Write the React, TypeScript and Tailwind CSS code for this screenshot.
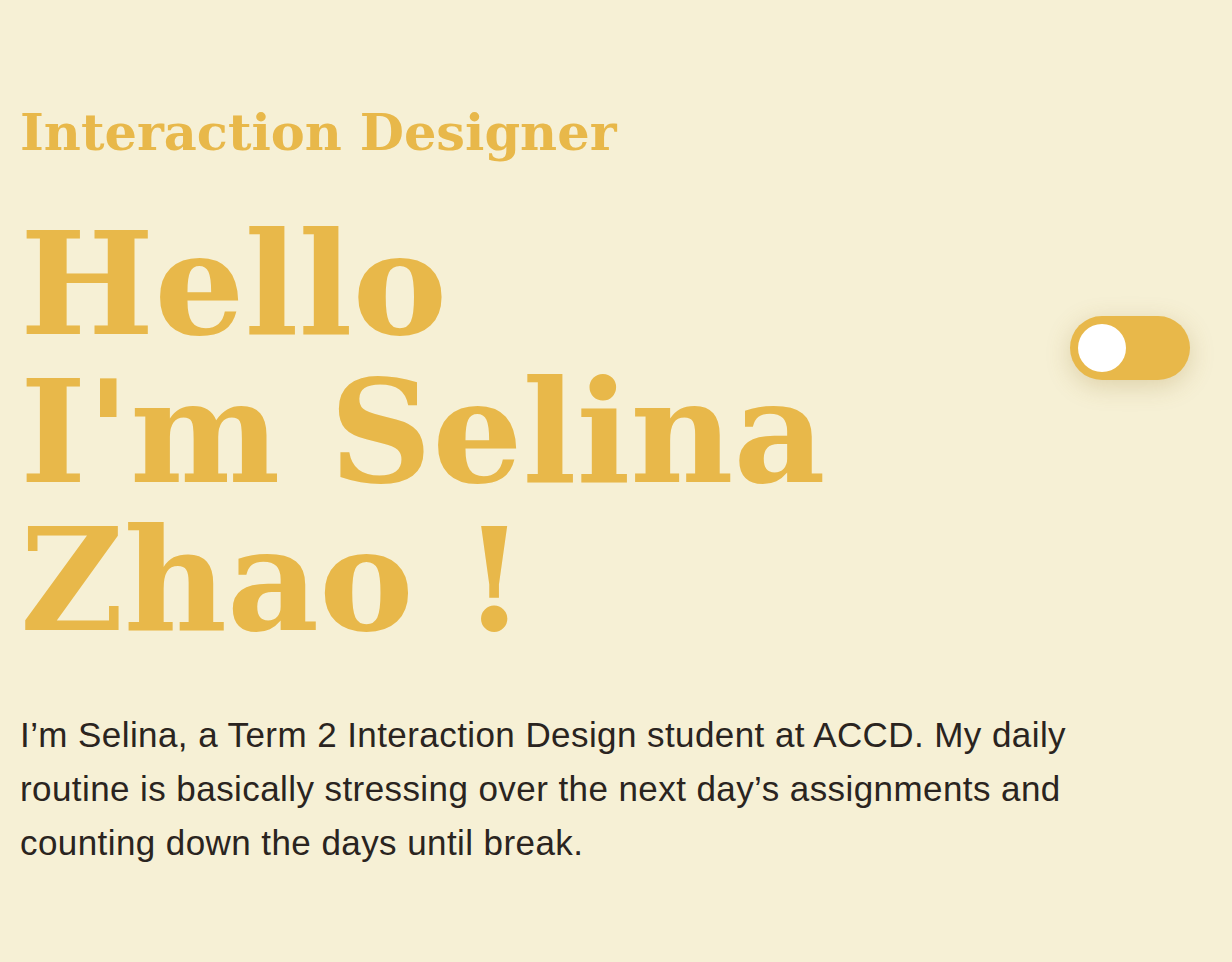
export default function App() {
  return (
    <div className="min-h-screen w-full bg-[#f6f0d5] px-5 pt-[102px]">
      <div className="flex items-start justify-between">
        <div>
          <h2 className="font-['DejaVu_Serif',serif] text-[51px] font-bold leading-[1.2] text-[#e8b84a]">
            Interaction Designer
          </h2>
          <h1 className="mt-[47px] font-['DejaVu_Serif',serif] text-[142px] font-bold leading-[148px] text-[#e8b84a]">
            Hello
            <br />
            I'm Selina
            <br />
            Zhao !
          </h1>
        </div>
        <button className="mr-[22px] mt-[214px] flex h-16 w-[120px] items-center rounded-full bg-[#e8b84a] px-2 shadow-[0_6px_24px_rgba(150,120,40,0.25)]">
          <span className="h-12 w-12 rounded-full bg-white" />
        </button>
      </div>
      <p className="mt-[54px] max-w-[1090px] font-['Liberation_Sans',Arial,sans-serif] text-[35px] leading-[54px] tracking-[0.42px] text-[#2a2420]">
        I’m Selina, a Term 2 Interaction Design student at ACCD. My daily routine is basically
        stressing over the next day’s assignments and counting down the days until break.
      </p>
    </div>
  );
}
